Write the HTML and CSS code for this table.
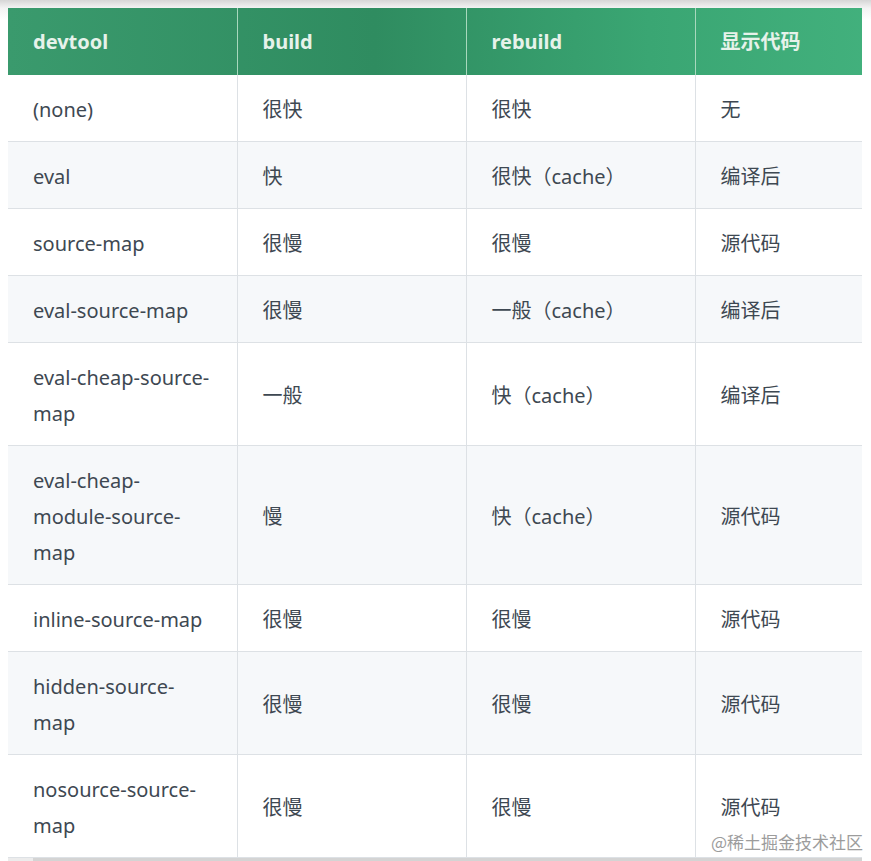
FILE: index.html
```html
<!DOCTYPE html>
<html lang="zh">
<head>
<meta charset="utf-8">
<link rel="stylesheet" href="styles.css">
</head>
<body>
<div class="page">
  <div class="scroller">
    <table class="devtable">
      <thead>
        <tr><th>devtool</th><th>build</th><th>rebuild</th><th>显示代码</th></tr>
      </thead>
      <tbody>
        <tr><td>(none)</td><td>很快</td><td>很快</td><td>无</td></tr>
        <tr><td>eval</td><td>快</td><td>很快（cache）</td><td>编译后</td></tr>
        <tr><td>source-map</td><td>很慢</td><td>很慢</td><td>源代码</td></tr>
        <tr><td>eval-source-map</td><td>很慢</td><td>一般（cache）</td><td>编译后</td></tr>
        <tr><td>eval-cheap-source-map</td><td>一般</td><td>快（cache）</td><td>编译后</td></tr>
        <tr><td>eval-cheap-module-source-map</td><td>慢</td><td>快（cache）</td><td>源代码</td></tr>
        <tr><td>inline-source-map</td><td>很慢</td><td>很慢</td><td>源代码</td></tr>
        <tr><td>hidden-source-map</td><td>很慢</td><td>很慢</td><td>源代码</td></tr>
        <tr><td>nosource-source-map</td><td>很慢</td><td>很慢</td><td>源代码</td></tr>
      </tbody>
    </table>
  </div>
  <div class="scrollbar"><div class="thumb"></div></div>
  <div class="watermark">@稀土掘金技术社区</div>
</div>
</body>
</html>
```

FILE: styles.css
```css
html, body {
  margin: 0;
  padding: 0;
  background: #ffffff;
}
body {
  font-family: "Noto Sans", "Noto Sans CJK SC", sans-serif;
  color: #3e4852;
}
.page {
  position: relative;
  width: 871px;
  height: 861px;
  padding: 8px 0 0 8px;
  box-sizing: border-box;
  background: linear-gradient(to bottom, #d6d6d6 0, #f3f3f3 8px, #ffffff 20px);
}
.scroller {
  width: 854px;
  overflow: hidden;
  background: #fff;
}
.devtable {
  border-collapse: collapse;
  table-layout: fixed;
  width: 916px;
  font-size: 20px;
}
.devtable th,
.devtable td {
  width: 229px;
  box-sizing: border-box;
  padding: 17px 25px 13px;
  line-height: 36px;
  text-align: left;
  vertical-align: middle;
}
.devtable th {
  font-weight: 700;
  color: #e6f2ea;
  border-right: 1px solid #a8d8bd;
  padding: 16px 25px 15px;
}
.devtable thead tr {
  background: linear-gradient(to right, #3a9a6d 0, #2f8c60 40%, #3aa673 70%, #44b37f 100%);
}
.devtable td {
  border: 1px solid #dde1e5;
}
.devtable tbody tr:first-child td {
  border-top: none;
}
.devtable td:first-child {
  border-left: none;
}
.devtable tbody tr:nth-child(even) {
  background: #f6f8fa;
}
.devtable tbody tr:nth-child(odd) {
  background: #ffffff;
}
.scrollbar {
  width: 854px;
  height: 4px;
  background: #ececec;
  position: relative;
}
.thumb {
  margin-left: 25px;
  height: 4px;
  background: #d4d4d4;
}
.watermark {
  position: absolute;
  right: 8px;
  bottom: 7px;
  font-size: 17px;
  color: #9c9c9c;
  font-family: "Noto Sans CJK SC", sans-serif;
  letter-spacing: 0;
}
```
